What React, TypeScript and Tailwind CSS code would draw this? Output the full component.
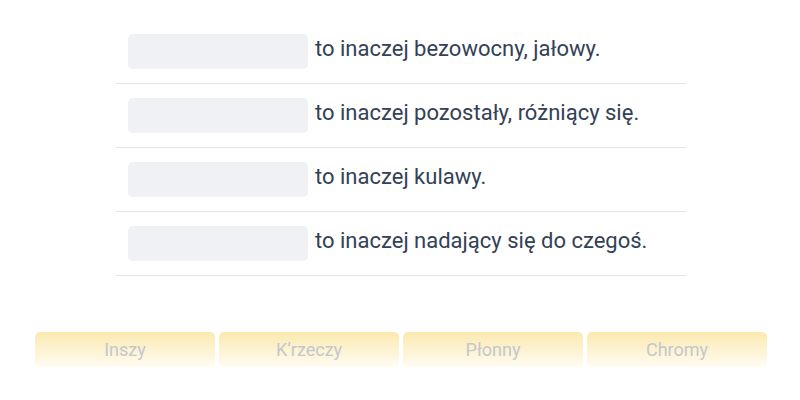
const rows = [
  "to inaczej bezowocny, jałowy.",
  "to inaczej pozostały, różniący się.",
  "to inaczej kulawy.",
  "to inaczej nadający się do czegoś.",
];

const options = ["Inszy", "K’rzeczy", "Płonny", "Chromy"];

export default function App() {
  return (
    <div className="w-[800px] h-[400px] bg-white font-['Roboto',sans-serif] overflow-hidden">
      <div className="w-[570px] ml-[116px] pt-[20px]">
        {rows.map((text) => (
          <div key={text} className="flex items-center h-[64px] px-3 border-b border-[#e1e3e6]">
            <div className="w-[180px] h-[35px] rounded-[5px] bg-[#f0f1f5] shrink-0" />
            <span className="ml-[7px] text-[22px] text-[#334155] leading-none -mt-[6px]">{text}</span>
          </div>
        ))}
      </div>
      <div className="flex gap-1 ml-[35px] mt-[56px]">
        {options.map((o) => (
          <div
            key={o}
            className="w-[180px] h-[35px] rounded-[5px] bg-gradient-to-b from-[#fbe9ae] to-[#fffcf2] flex items-center justify-center text-[18px] text-[#c4c7cd]"
          >
            {o}
          </div>
        ))}
      </div>
    </div>
  );
}
